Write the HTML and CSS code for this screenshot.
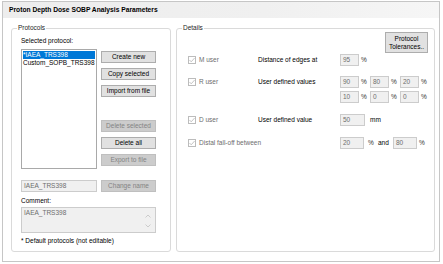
FILE: index.html
```html
<!DOCTYPE html>
<html>
<head>
<meta charset="utf-8">
<link rel="stylesheet" href="styles.css">
</head>
<body>
<div class="window">
  <div class="titlebar">Proton Depth Dose SOBP Analysis Parameters</div>
  <div class="panes">
    <fieldset class="group protocols">
      <legend>Protocols</legend>
      <div class="proto-body">
        <div class="label">Selected protocol:</div>
        <div class="list-row">
          <ul class="listbox">
            <li class="selected">*IAEA_TRS398</li>
            <li>Custom_SOPB_TRS398</li>
          </ul>
          <div class="btn-col">
            <button class="btn">Create new</button>
            <button class="btn">Copy selected</button>
            <button class="btn">Import from file</button>
            <button class="btn disabled gap-top">Delete selected</button>
            <button class="btn">Delete all</button>
            <button class="btn disabled">Export to file</button>
          </div>
        </div>
        <div class="name-row">
          <div class="field name-field">IAEA_TRS398</div>
          <button class="btn disabled">Change name</button>
        </div>
        <div class="label comment-label">Comment:</div>
        <div class="comment">
          <span>IAEA_TRS398</span>
          <div class="scroll">
            <svg width="6" height="4" viewBox="0 0 6 4"><path d="M0.5 3.5 L3 1 L5.5 3.5" fill="none" stroke="#c2c2c2" stroke-width="0.8"/></svg>
            <svg width="6" height="4" viewBox="0 0 6 4"><path d="M0.5 0.5 L3 3 L5.5 0.5" fill="none" stroke="#c2c2c2" stroke-width="0.8"/></svg>
          </div>
        </div>
        <div class="note">* Default protocols (not editable)</div>
      </div>
    </fieldset>
    <fieldset class="group details">
      <legend>Details</legend>
      <div class="details-body">
        <div class="tol-row">
          <button class="btn tol">Protocol<br>Tolerances..</button>
        </div>
        <div class="param-grid">
          <div class="chk row-m"><span class="box"><svg width="8" height="8" viewBox="0 0 8 8"><path d="M1.5 4 L3.2 5.8 L6.6 2" fill="none" stroke="#bdbdbd" stroke-width="0.9"/></svg></span>M user</div>
          <div class="plabel row-m">Distance of edges at</div>
          <div class="vals row-m"><span class="field f19">95</span><span class="unit">%</span></div>

          <div class="chk row-r1"><span class="box"><svg width="8" height="8" viewBox="0 0 8 8"><path d="M1.5 4 L3.2 5.8 L6.6 2" fill="none" stroke="#bdbdbd" stroke-width="0.9"/></svg></span>R user</div>
          <div class="plabel row-r1">User defined values</div>
          <div class="vals row-r1"><span class="field f19">90</span><span class="unit">%</span><span class="field f19">80</span><span class="unit">%</span><span class="field f19">20</span><span class="unit">%</span></div>

          <div class="vals row-r2"><span class="field f19">10</span><span class="unit">%</span><span class="field f19">0</span><span class="unit">%</span><span class="field f19">0</span><span class="unit">%</span></div>

          <div class="chk row-d"><span class="box"><svg width="8" height="8" viewBox="0 0 8 8"><path d="M1.5 4 L3.2 5.8 L6.6 2" fill="none" stroke="#bdbdbd" stroke-width="0.9"/></svg></span>D user</div>
          <div class="plabel row-d">User defined value</div>
          <div class="vals row-d"><span class="field f25">50</span><span class="unit-mm">mm</span></div>

          <div class="chk wide row-f"><span class="box"><svg width="8" height="8" viewBox="0 0 8 8"><path d="M1.5 4 L3.2 5.8 L6.6 2" fill="none" stroke="#bdbdbd" stroke-width="0.9"/></svg></span>Distal fall-off between</div>
          <div class="vals row-f"><span class="field f24">20</span><span class="unit-a">%</span><span class="and">and</span><span class="field f24">80</span><span class="unit">%</span></div>
        </div>
      </div>
    </fieldset>
  </div>
</div>
</body>
</html>
```

FILE: styles.css
```css
* { box-sizing: border-box; }
html, body { margin: 0; padding: 0; background: #ffffff; }
body {
  font-family: "Liberation Sans", Arial, sans-serif;
  font-size: 6.5px;
  line-height: 8px;
  color: #000;
}
.window {
  margin: 1px 0 0 2px;
  width: 438px;
  height: 261px;
  border: 1px solid #c6c6c6;
  display: flex;
  flex-direction: column;
  background: #fff;
}
.titlebar {
  height: 16px;
  padding: 4px 0 0 6px;
  font-weight: bold;
  font-size: 6.7px;
  background: linear-gradient(to right, #ededed 0%, #f0f0f0 60%, #f6f6f6 100%);
}
.panes {
  flex: 1;
  display: flex;
  gap: 5px;
  padding: 6px 4px 9px 8px;
}
.group {
  margin: 0;
  padding: 0;
  min-width: 0;
  border: 1px solid #dadada;
  border-radius: 3px;
}
.group legend {
  margin-left: 5px;
  padding: 0 1px;
  line-height: 8px;
  color: #1e1e1e;
}
.protocols { width: 160px; }
.details { flex: 1; }

.proto-body { padding: 5px 0 0 9px; }
.label { line-height: 8px; }
.list-row { display: flex; margin-top: 4px; }
.listbox {
  list-style: none;
  margin: 0;
  padding: 1px 0 0 0;
  width: 76px;
  height: 120px;
  border: 1px solid #a9a9a9;
}
.listbox li { line-height: 8px; padding: 0 1px 0 1px; height: 8px; }
.listbox li.selected { background: #0078d7; color: #fff; margin: 0 1px; padding-left: 0; }
.btn-col {
  display: flex;
  flex-direction: column;
  gap: 5px;
  margin-left: 4px;
  padding-top: 2px;
}
.btn {
  font-family: inherit;
  font-size: 6.5px;
  line-height: 8px;
  width: 55px;
  height: 12px;
  padding: 0;
  margin: 0;
  background: #e1e1e1;
  border: 1px solid #adadad;
  color: #000;
  border-radius: 0;
}
.btn.disabled { background: #cccccc; border-color: #bfbfbf; color: #838383; }
.gap-top { margin-top: 18px; }
.name-row { display: flex; gap: 4px; margin-top: 11px; }
.field {
  display: inline-block;
  height: 12px;
  border: 1px solid #cccccc;
  background: #f0f0f0;
  color: #6d6d6d;
  padding: 1px 0 0 2px;
  line-height: 8px;
}
.name-field { width: 76px; }
.comment-label { margin-top: 5px; }
.comment {
  margin-top: 2px;
  width: 135px;
  height: 26px;
  border: 1px solid #cccccc;
  background: #f0f0f0;
  color: #6d6d6d;
  padding: 1px 0 0 2px;
  display: flex;
  justify-content: space-between;
}
.scroll {
  display: flex;
  flex-direction: column;
  justify-content: space-between;
  padding: 5px 4px 4px 0;
}
.scroll svg { display: block; }
.note { margin-top: 4px; }

.details-body { padding: 0 6px 0 11px; }
.tol-row { display: flex; justify-content: flex-end; }
.btn.tol { width: 43px; height: 21px; }
.param-grid {
  display: grid;
  grid-template-columns: 70px 82px auto;
  grid-template-rows: 12px 22px 15px 23px 23px;
  align-items: end;
  margin-top: 1px;
}
.row-m { grid-row: 1; }
.row-r1 { grid-row: 2; }
.row-r2 { grid-row: 3; grid-column: 3; }
.row-d { grid-row: 4; }
.row-f { grid-row: 5; }
.chk {
  display: flex;
  align-items: center;
  color: #6d6d6d;
  height: 12px;
}
.chk.wide { grid-column: 1 / 3; }
.box {
  width: 8px;
  height: 8px;
  border: 1px solid #bcbcbc;
  background: #fff;
  margin-right: 3px;
}
.box svg { display: block; margin: -1px 0 0 -1px; }
.plabel { height: 12px; line-height: 12px; }
.vals { display: flex; align-items: center; grid-column: 3; height: 12px; }
.f19 { width: 19px; }
.f25 { width: 25px; }
.f24 { width: 24px; }
.unit { width: 11px; padding-left: 2px; color: #333; }
.unit-mm { margin-left: 5px; color: #000; }
.unit-a { width: 14px; padding-left: 4px; color: #333; }
.and { width: 15px; }
```
